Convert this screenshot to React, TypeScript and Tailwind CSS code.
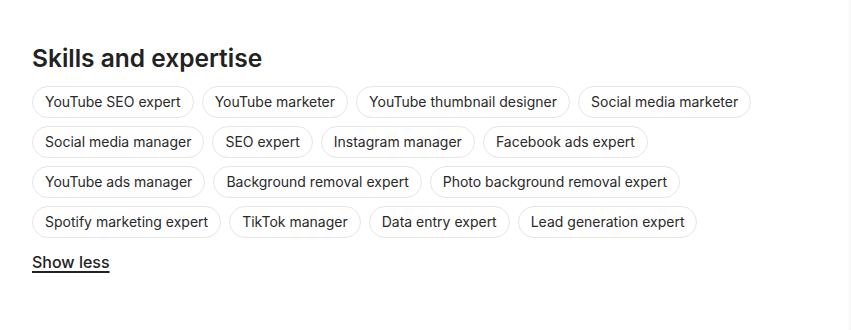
import React from "react";

const skills = [
  "YouTube SEO expert",
  "YouTube marketer",
  "YouTube thumbnail designer",
  "Social media marketer",
  "Social media manager",
  "SEO expert",
  "Instagram manager",
  "Facebook ads expert",
  "YouTube ads manager",
  "Background removal expert",
  "Photo background removal expert",
  "Spotify marketing expert",
  "TikTok manager",
  "Data entry expert",
  "Lead generation expert",
];

export default function App() {
  return (
    <div className="flex h-[330px] w-[851px] bg-white font-['Inter',sans-serif] text-[#181818]">
      <div className="flex-1 pl-8 pr-[80px] pt-[43px]">
        <h2 className="text-[24.5px] font-semibold leading-[30px] text-[#222]">Skills and expertise</h2>
        <div className="mt-[13px] flex flex-wrap gap-2 w-[730px]">
          {skills.map((s) => (
            <span
              key={s}
              className="flex h-8 items-center rounded-full border border-[#e4e6e4] px-3 text-[14px] leading-none text-[#2a2a2a]"
            >
              {s}
            </span>
          ))}
        </div>
        <div className="mt-[12px]">
          <a className="text-[16px] font-medium underline underline-offset-[3px] decoration-[1.5px] text-[#222]">Show less</a>
        </div>
      </div>
      <div className="w-[3px] bg-gradient-to-r from-white to-[#f2f2f2]" />
    </div>
  );
}
